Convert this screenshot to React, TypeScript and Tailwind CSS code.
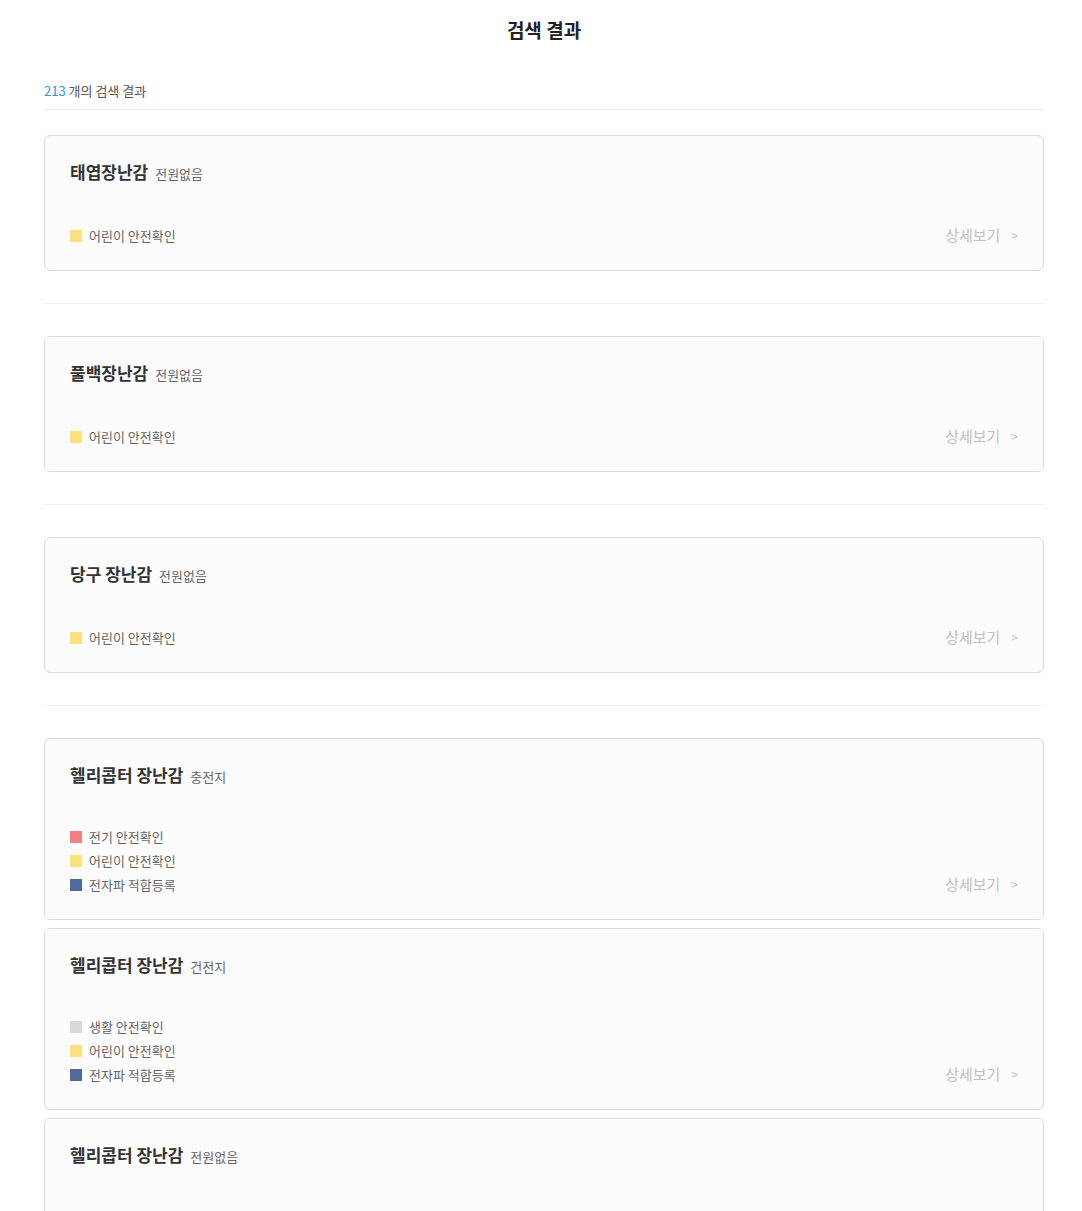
import React from 'react';

type Cert = { color: string; label: string };
type Item = { name: string; power: string; certs: Cert[]; divider: boolean };

const YELLOW = { color: 'bg-[#fde27c]', label: '어린이 안전확인' };
const RED = { color: 'bg-[#f47f7f]', label: '전기 안전확인' };
const BLUE = { color: 'bg-[#4f6a9c]', label: '전자파 적합등록' };
const GRAY = { color: 'bg-[#dadada]', label: '생활 안전확인' };

const items: Item[] = [
  { name: '태엽장난감', power: '전원없음', certs: [YELLOW], divider: true },
  { name: '풀백장난감', power: '전원없음', certs: [YELLOW], divider: true },
  { name: '당구 장난감', power: '전원없음', certs: [YELLOW], divider: true },
  { name: '헬리콥터 장난감', power: '충전지', certs: [RED, YELLOW, BLUE], divider: false },
  { name: '헬리콥터 장난감', power: '건전지', certs: [GRAY, YELLOW, BLUE], divider: false },
  { name: '헬리콥터 장난감', power: '전원없음', certs: [YELLOW], divider: false },
];

const ResultCard: React.FC<{ item: Item }> = ({ item }) => (
  <div className="border border-[#dcdcdc] rounded-md bg-[#fcfcfc] px-[25px] pt-[25px] pb-[22px]">
    <div className="flex items-baseline h-[22px] leading-[22px]">
      <span className="text-[17px] font-bold text-[#333]">{item.name}</span>
      <span className="ml-[7px] text-[13px] text-[#666]">{item.power}</span>
    </div>
    <div className="mt-[39px] flex items-end justify-between">
      <ul>
        {item.certs.map((c, i) => (
          <li key={i} className="flex items-center h-[24px] text-[13px] text-[#666]">
            <span className={`w-[12px] h-[12px] mr-[7px] ${c.color}`} />
            {c.label}
          </li>
        ))}
      </ul>
      <a className="flex items-center h-[26px] text-[15px] text-[#c0c0c0] cursor-pointer">
        상세보기
        <span className="ml-[11px] text-[12px]">&gt;</span>
      </a>
    </div>
  </div>
);

export default function App() {
  return (
    <div
      className="min-h-screen bg-white"
      style={{ fontFamily: '"Noto Sans CJK KR", "Noto Sans", sans-serif' }}
    >
      <div className="ml-[44px] w-[1000px]">
        <h1 className="pt-4 text-center text-[19px] leading-[28px] font-bold text-[#222]">검색 결과</h1>
        <div className="mt-[37px] pb-2 border-b border-[#ececec] text-[13px] leading-[20px] text-[#555]">
          <span className="text-[#2f9bd6]">213</span> 개의 검색 결과
        </div>
        <div className="mt-[25px]">
          {items.map((item, i) => (
            <div key={i}>
              <ResultCard item={item} />
              {item.divider ? (
                <div className="my-[32px] border-t border-[#efefef]" />
              ) : (
                <div className="h-[8px]" />
              )}
            </div>
          ))}
        </div>
      </div>
    </div>
  );
}
